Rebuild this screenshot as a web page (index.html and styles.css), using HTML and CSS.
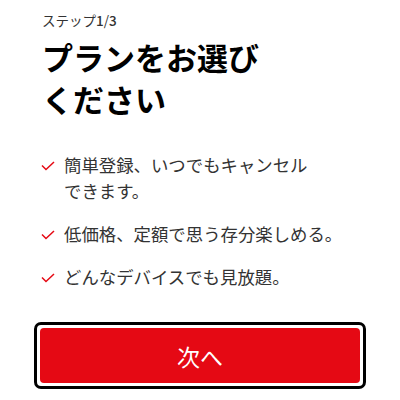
FILE: index.html
```html
<!DOCTYPE html>
<html lang="ja">
<head>
<meta charset="utf-8">
<link rel="stylesheet" href="styles.css">
</head>
<body>
<main class="page">
  <div class="step">ステップ<b>1</b>/<b>3</b></div>
  <h1 class="title">プランをお選び<br>ください</h1>
  <ul class="list">
    <li class="item"><svg class="check" viewBox="0 0 14 10"><path d="M1 4.5 L5 8.5 L13 1" fill="none" stroke="#e50914" stroke-width="1.5"/></svg><span>簡単登録、いつでもキャンセル<br>できます。</span></li>
    <li class="item"><svg class="check" viewBox="0 0 14 10"><path d="M1 4.5 L5 8.5 L13 1" fill="none" stroke="#e50914" stroke-width="1.5"/></svg><span>低価格、定額で思う存分楽しめる。</span></li>
    <li class="item"><svg class="check" viewBox="0 0 14 10"><path d="M1 4.5 L5 8.5 L13 1" fill="none" stroke="#e50914" stroke-width="1.5"/></svg><span>どんなデバイスでも見放題。</span></li>
  </ul>
  <div class="focus-ring"><button class="next">次へ</button></div>
</main>
</body>
</html>
```
FILE: styles.css
```css
html, body {
  margin: 0;
  padding: 0;
  background: #fff;
}
body {
  font-family: "Noto Sans CJK JP", "Noto Sans", sans-serif;
  color: #333;
}
.page {
  padding: 10px 34px 0 34px;
}
.step {
  font-size: 13.5px;
  line-height: 20px;
  padding-left: 8px;
  color: #333;
}
.step b {
  font-weight: 500;
}
.title {
  margin: 6px 0 0 8px;
  font-size: 31px;
  line-height: 42px;
  font-weight: 700;
  color: #000;
}
.list {
  list-style: none;
  margin: 32px 0 0 7px;
  padding: 0;
  display: flex;
  flex-direction: column;
  gap: 17px;
}
.item {
  display: flex;
  align-items: flex-start;
  font-size: 17.4px;
  line-height: 26px;
  color: #333;
}
.check {
  width: 14px;
  height: 10px;
  margin-top: 9px;
  margin-right: 9px;
  flex: none;
}
.focus-ring {
  margin-top: 32px;
  border: 3px solid #000;
  border-radius: 7px;
  padding: 3px;
}
.next {
  display: block;
  width: 100%;
  height: 55px;
  border: none;
  border-radius: 4px;
  background: #e50914;
  color: #fff;
  font-family: "Noto Sans CJK JP", "Noto Sans", sans-serif;
  font-size: 23px;
  padding: 0;
}
```
